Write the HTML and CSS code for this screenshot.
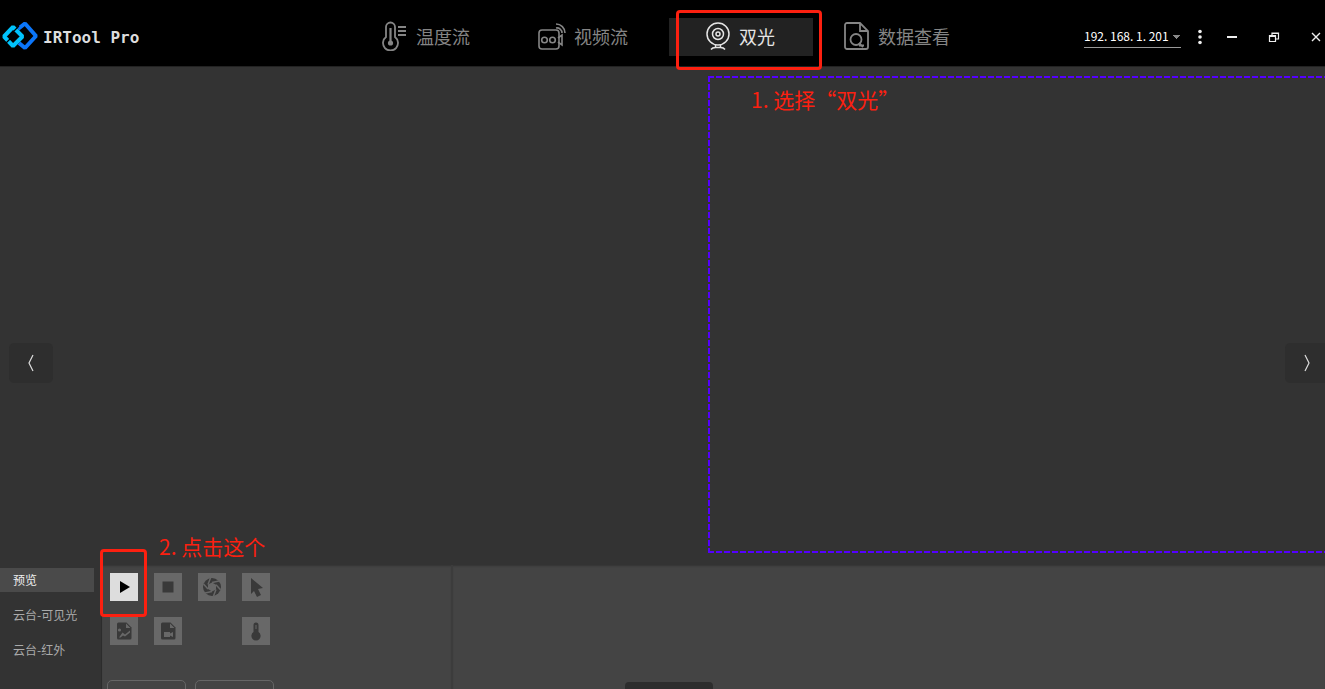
FILE: index.html
```html
<!DOCTYPE html>
<html lang="zh-CN">
<head>
<meta charset="utf-8">
<title>IRTool Pro</title>
<link rel="stylesheet" href="styles.css">
</head>
<body>
<header class="topbar">
  <div class="brand">
    <svg class="logo" viewBox="0 0 38 30" fill="none" stroke-width="4">
      <path d="M18 7l7-5.500L36 14 25 26l-6-5" stroke="#0b76fa" stroke-linejoin="bevel"/>
      <path d="M4 14.500L13 5l9.500 9.500L13 24z" stroke="#00c3fc" stroke-linejoin="bevel"/>
      <path d="M14 9l5-5M6 21l5-5" stroke="#000" stroke-width="1.200"/>
    </svg>
    <h1 class="brand-name">IRTool Pro</h1>
  </div>
  <nav class="tabs">
    <button class="tab" type="button">
      <svg width="26" height="30" viewBox="0 0 26 30" fill="none" stroke="currentColor" stroke-width="1.800">
        <path d="M4 16V6a4.500 4.500 0 0 1 9 0v10a7.500 7.500 0 1 1-9 0z"/>
        <path d="M8.500 7v14" stroke-width="2.200"/><circle cx="8.500" cy="22" r="2.600" fill="currentColor" stroke="none"/>
        <path d="M16 6h8M16 10h8M16 14h8"/>
      </svg>
      <span>温度流</span>
    </button>
    <button class="tab" type="button">
      <svg width="28" height="30" viewBox="0 0 28 30" fill="none" stroke="currentColor" stroke-width="1.600">
        <rect x="1" y="9" width="20" height="19" rx="3"/>
        <circle cx="6.500" cy="19" r="2.800"/><circle cx="14.500" cy="19" r="2.800"/>
        <path d="M20 17l4-3v10l-4-3M18 7a5 5 0 0 1 6 5M18 3a9 9 0 0 1 9 9"/>
      </svg>
      <span>视频流</span>
    </button>
    <button class="tab tab-active" type="button" aria-current="page">
      <svg width="26" height="30" viewBox="0 0 26 30" fill="none" stroke="currentColor" stroke-width="1.500">
        <circle cx="13" cy="13" r="11"/><circle cx="13" cy="13" r="5.500"/><circle cx="13" cy="13" r="2"/>
        <path d="M10.500 23.500v3M15.500 23.500v3M6 28.500c1-1.500 3-2 4.500-2h5c1.500 0 3.500.5 4.500 2"/>
      </svg>
      <span>双光</span>
    </button>
    <button class="tab" type="button">
      <svg width="26" height="30" viewBox="0 0 26 30" fill="none" stroke="currentColor" stroke-width="1.800">
        <path d="M3 2h13l8 8v16a2 2 0 0 1-2 2H3a2 2 0 0 1-2-2V4a2 2 0 0 1 2-2zM16 2v8h8"/>
        <circle cx="12" cy="18.500" r="5.500"/><path d="M15 22l4 4M15 24.500h5"/>
      </svg>
      <span>数据查看</span>
    </button>
  </nav>
  <div class="tools">
    <select class="device" aria-label="IP"><option>192. 168. 1. 201</option></select>
    <button class="more" type="button" aria-label="菜单"><svg width="6" height="16" fill="currentColor"><circle cx="3" cy="2.500" r="1.800"/><circle cx="3" cy="8" r="1.800"/><circle cx="3" cy="13.500" r="1.800"/></svg></button>
    <div class="window-buttons">
      <button type="button" aria-label="最小化"><svg width="12" height="12" fill="currentColor"><path d="M1 5h10v2H1z"/></svg></button>
      <button type="button" aria-label="还原"><svg width="12" height="12" fill="none" stroke="currentColor" stroke-width="1.200"><path d="M1.500 4.500h6v6h-6zM1.500 5.500h6M4 4V2h6.500v6H8M4 2.500h6"/></svg></button>
      <button type="button" aria-label="关闭"><svg width="12" height="12" stroke="currentColor" stroke-width="1.400"><path d="M2 2l8 8M10 2l-8 8"/></svg></button>
    </div>
  </div>
</header>

<main class="viewer">
  <section class="pane">
    <button class="arrow" type="button" aria-label="上一个"><svg width="8" height="18" fill="none" stroke="currentColor" stroke-width="1.200"><path d="M6 1L2 9l4 8"/></svg></button>
  </section>
  <section class="pane pane-selected">
    <p class="note">1. 选择“双光”</p>
    <button class="arrow arrow-next" type="button" aria-label="下一个"><svg width="8" height="18" fill="none" stroke="currentColor" stroke-width="1.200"><path d="M2 1l4 8-4 8"/></svg></button>
  </section>
</main>

<footer class="dock">
  <nav class="side">
    <button class="side-item side-active" type="button">预览</button>
    <button class="side-item" type="button">云台-可见光</button>
    <button class="side-item" type="button">云台-红外</button>
  </nav>
  <section class="controls">
    <div class="actions">
      <button class="action action-play" type="button" aria-label="播放"><svg viewBox="0 0 28 28"><path d="M10 8l10 6-10 6z"/></svg></button>
      <button class="action" type="button" aria-label="停止"><svg viewBox="0 0 28 28"><path d="M8.500 8.500h11v11h-11z"/></svg></button>
      <button class="action" type="button" aria-label="拍照"><svg viewBox="0 0 28 28"><circle cx="14" cy="14" r="9"/><path d="M14 9.500L21 8M18 11.800l4.500 5M18 16.500l-2.500 6.500M14 18.500L7 20M10 16l-4.500-5M10 11.500L12.500 5" stroke="#686868" stroke-width="1.500"/><path d="M14 9.500l4 2.300v4.700l-4 2-4-2.500v-4.500z" fill="#686868"/></svg></button>
      <button class="action" type="button" aria-label="选择"><svg viewBox="0 0 28 28"><path d="M9 5l12 10-5 1 3 6-4 2-3-6-3 3z"/></svg></button>
      <button class="action" type="button" aria-label="图片"><svg viewBox="0 0 28 28"><path d="M8.500 5.500h8l5 5V21a1.500 1.500 0 0 1-1.500 1.500H8.500A1.500 1.500 0 0 1 7 21V7a1.500 1.500 0 0 1 1.500-1.500z"/><path d="M16 6.500V11h4.500M9 20.500l3.500-5 2.500 2 5-4v2l-5 4-2-1-2.500 2z" fill="#686868"/><circle cx="9.500" cy="13" r="1.600" fill="#686868"/></svg></button>
      <button class="action" type="button" aria-label="录像"><svg viewBox="0 0 28 28"><path d="M8.500 5.500h8l5 5V21a1.500 1.500 0 0 1-1.500 1.500H8.500A1.500 1.500 0 0 1 7 21V7a1.500 1.500 0 0 1 1.500-1.500z"/><path d="M16 6.500V11h4.500M10 15h6v1.500l3-1.500v5l-3-1.500V20h-6z" fill="#686868"/></svg></button>
      <button class="action action-last" type="button" aria-label="测温"><svg viewBox="0 0 28 28"><path d="M11.500 8a2.500 2.500 0 0 1 5 0v7a4.600 4.600 0 1 1-5 0z"/><path d="M14 8v4" stroke="#686868"/></svg></button>
    </div>
    <div class="options">
      <button class="option" type="button" aria-label="选项一"></button>
      <button class="option" type="button" aria-label="选项二"></button>
    </div>
    <p class="note note-play">2. 点击这个</p>
  </section>
  <section class="output"><button class="handle" type="button" aria-label="展开"></button></section>
</footer>
<div class="mark mark-tab"></div>
<div class="mark mark-play"></div>
</body>
</html>
```
FILE: styles.css
```css
* { box-sizing: border-box; }
body {
  margin: 0;
  height: 100vh;
  display: flex;
  flex-direction: column;
  overflow: hidden;
  position: relative;
  background: #333;
  color: #ddd;
  font-family: "Noto Sans CJK SC", sans-serif;
}
button { padding: 0; border: 0; background: none; color: inherit; font: inherit; }
svg { display: block; flex: none; }
p, h1 { margin: 0; }

.topbar {
  flex: none;
  height: 67px;
  padding-top: 7px;
  display: grid;
  grid-template-columns: 1fr auto 1fr;
  align-items: center;
  background: #000;
  border-bottom: 1px solid #222;
}
.brand { display: flex; align-items: center; gap: 5px; }
.logo { width: 38px; height: 30px; }
.brand-name { padding-top: 2px; font: bold 16px/20px "DejaVu Sans Mono", monospace; }
.tabs { display: grid; grid-template-columns: repeat(4, 144px); gap: 13px; }
.tab {
  height: 38px;
  padding: 0 2px 2px 0;
  display: flex;
  align-items: center;
  justify-content: center;
  gap: 8px;
  color: #858585;
  font-size: 18px;
  line-height: 24px;
}
.tab-active { background: #222; color: #e4e4e4; }
.tools { display: flex; align-items: center; justify-content: flex-end; color: #eee; }
.device {
  appearance: none;
  width: 97px;
  height: 22px;
  padding: 0;
  border: 0;
  border-bottom: 1px solid #999;
  border-radius: 0;
  color: #fff;
  font: 12px/20px "Noto Sans CJK SC", sans-serif;
  background:
    linear-gradient(45deg, transparent 50%, #888 50%) 89px 9px / 4px 4px no-repeat,
    linear-gradient(315deg, transparent 50%, #888 50%) 93px 9px / 4px 4px no-repeat;
}
.more { margin-left: 16px; }
.window-buttons { display: flex; gap: 30px; margin: 0 3px 0 23px; }

.viewer { flex: 1; min-height: 0; display: grid; grid-template-columns: 708fr 617fr; }
.pane { display: flex; align-items: center; padding: 94px 0 0 9px; }
.pane-selected {
  margin: 9px 0 12px;
  padding: 96px 0 0;
  position: relative;
  background:
    repeating-linear-gradient(90deg, #50f 0 6px, #333 6px 8px) top / 100% 2px no-repeat,
    repeating-linear-gradient(90deg, #50f 0 6px, #333 6px 8px) bottom / 100% 2px no-repeat,
    repeating-linear-gradient(#50f 0 6px, #333 6px 8px) left / 2px 100% no-repeat;
}
.arrow {
  width: 44px;
  height: 40px;
  display: grid;
  place-items: center;
  border-radius: 5px;
  background: #2e2e2e;
}
.arrow-next { width: 40px; margin-left: auto; padding-left: 4px; border-radius: 5px 0 0 5px; }
.note { position: absolute; left: 43px; top: 8px; color: #fc2010; font-size: 21px; line-height: 30px; white-space: nowrap; }

.dock {
  flex: none;
  height: 124px;
  display: grid;
  grid-template-columns: 102px 351px 1fr;
  grid-template-rows: 100%;
  background: #444;
}
.side { display: flex; flex-direction: column; gap: 11px; padding: 3px 7px 0 0; background: #333; border-right: 1px solid #2c2c2c; }
.side-item { height: 24px; padding-left: 13px; text-align: left; color: #aaa; font-size: 12px; line-height: 24px; }
.side-active { background: #4a4a4a; color: #eee; }
.controls { position: relative; padding: 8px 0 0 8px; border-right: 2px solid #3c3c3c; box-shadow: inset 0 2px 2px -1px #333; }
.note-play { left: 57px; top: -34px; }
.actions { display: grid; grid-template-columns: repeat(4, 28px); gap: 16px; }
.action { width: 28px; height: 28px; background: #686868; }
.action svg { width: 28px; height: 28px; fill: #393939; }
.action-play { background: #ddd; }
.action-play svg { fill: #000; }
.action-last { grid-column: 4; }
.options { display: grid; grid-template-columns: 79px 79px; gap: 9px; margin: 35px 0 0 -3px; }
.option { height: 28px; border: 1px solid #666; border-radius: 5px; }
.output { display: flex; align-items: flex-end; padding-left: 172px; box-shadow: inset 0 2px 2px -1px #333; }
.handle { width: 88px; height: 7px; border-radius: 4px 4px 0 0; background: #2d2d2d; }

.mark { position: absolute; border: 3px solid #fc2010; border-radius: 4px; pointer-events: none; }
.mark-tab { left: calc(50% + 13px); top: 10px; width: 146px; height: 60px; }
.mark-play { left: 100px; bottom: 72px; width: 47px; height: 68px; }
```
